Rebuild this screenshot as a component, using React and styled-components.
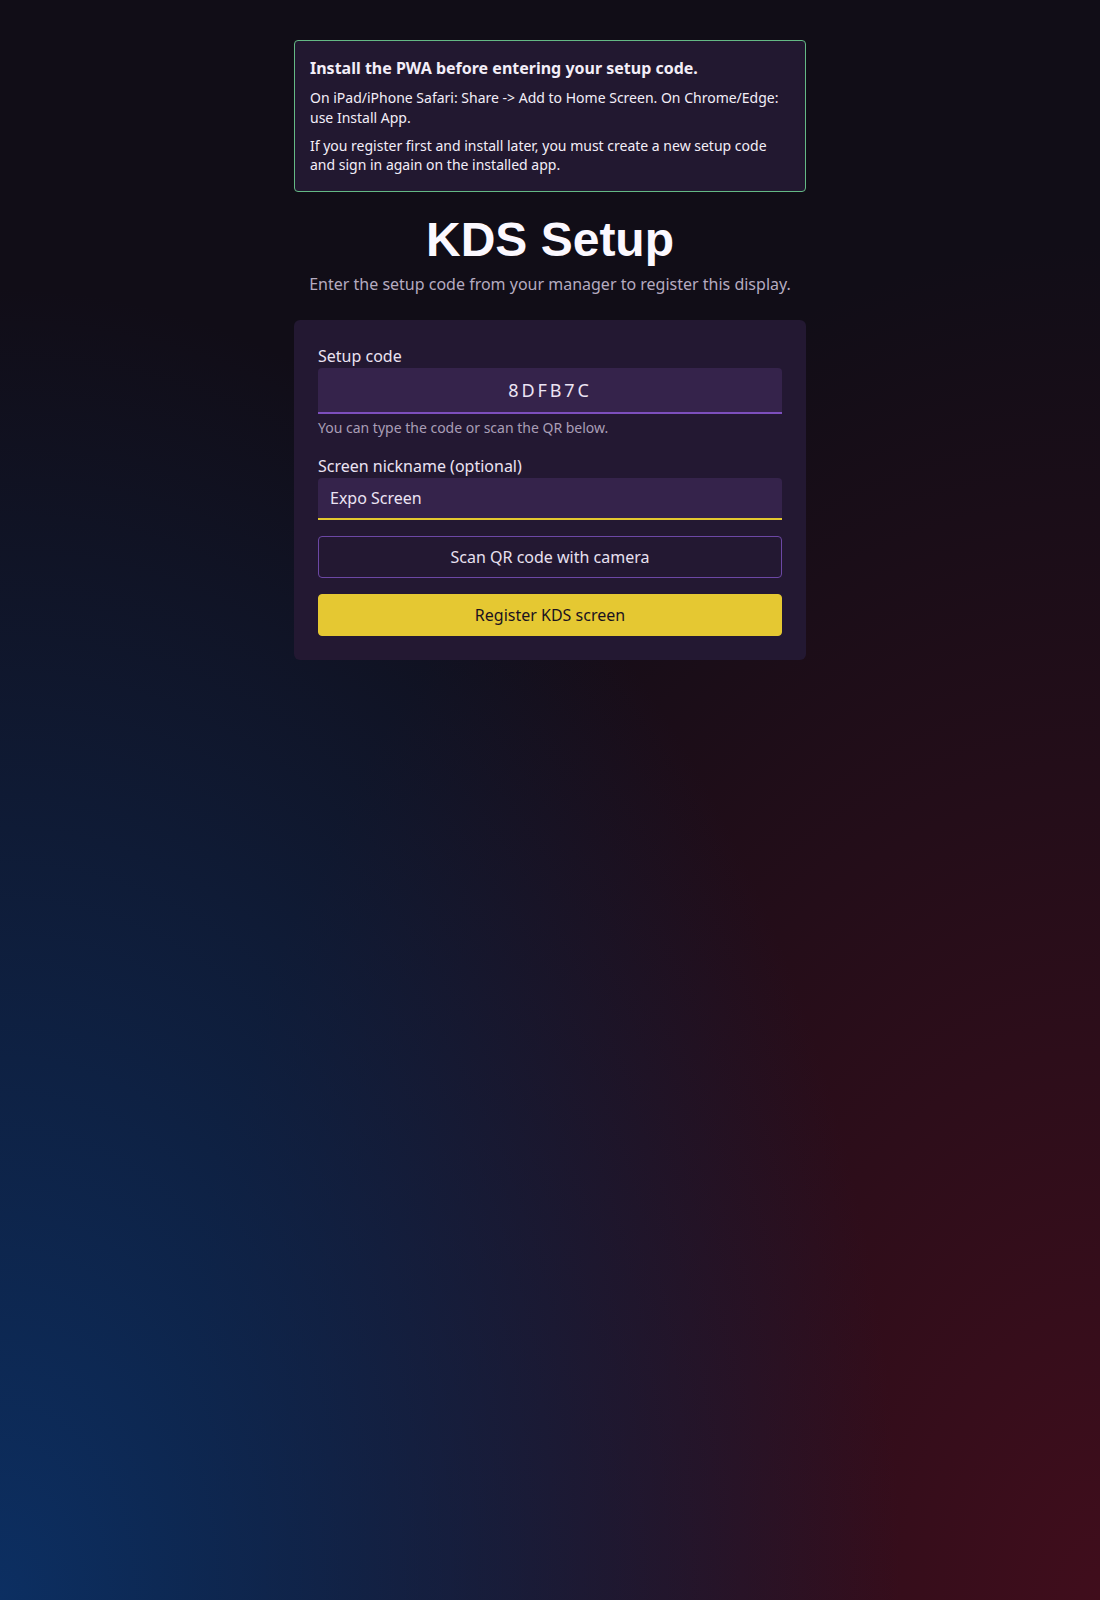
import styled, { createGlobalStyle } from 'styled-components';

const GlobalStyle = createGlobalStyle`
  * {
    box-sizing: border-box;
  }
  html, body {
    margin: 0;
    min-height: 100%;
  }
  body {
    font-family: "Noto Sans", "Open Sans", sans-serif;
    color: #f3eef8;
    background-color: #110d17;
    background-image:
      radial-gradient(ellipse at 0% 100%, rgba(12, 47, 98, 1) 0%, rgba(12, 47, 98, 0) 58%),
      radial-gradient(ellipse at 100% 100%, rgba(64, 13, 28, 1) 0%, rgba(64, 13, 28, 0) 60%);
    background-repeat: no-repeat;
    min-height: 1600px;
  }
`;

const Page = styled.main`
  width: 512px;
  margin: 0 auto;
  padding-top: 40px;
  display: flex;
  flex-direction: column;
`;

const Notice = styled.section`
  background: #221830;
  border: 1px solid #64b985;
  border-radius: 4px;
  padding: 16px 15px;
`;

const NoticeTitle = styled.p`
  margin: 0 0 9px;
  font-size: 16px;
  font-weight: 700;
  line-height: 1.4;
`;

const NoticeText = styled.p`
  margin: 0;
  font-size: 14px;
  line-height: 1.4;
  & + & {
    margin-top: 8px;
  }
`;

const Title = styled.h1`
  margin: 19px 0 0;
  font-family: "Liberation Sans", Arial, sans-serif;
  font-size: 48px;
  font-weight: 700;
  line-height: 1.2;
  text-align: center;
  color: #fbf8ff;
`;

const Subtitle = styled.p`
  margin: 4px 0 24px;
  font-size: 16px;
  line-height: 1.5;
  text-align: center;
  color: #b5abc0;
`;

const Card = styled.form`
  background: #231832;
  border-radius: 6px;
  padding: 24px;
  display: flex;
  flex-direction: column;
  gap: 16px;
`;

const Field = styled.div`
  display: flex;
  flex-direction: column;
`;

const Label = styled.label`
  font-size: 16px;
  line-height: 1.5;
  color: #ebe3f3;
`;

const Input = styled.input`
  width: 100%;
  height: ${p => (p.$code ? '46px' : '42px')};
  padding: 0 12px;
  border: none;
  border-bottom: 2px solid ${p => (p.$accent ? '#e3c82f' : '#7d4fbd')};
  border-radius: 4px 4px 0 0;
  background: #35234b;
  color: #ece4f4;
  font-family: "Noto Sans", sans-serif;
  font-size: ${p => (p.$code ? '18px' : '16px')};
  letter-spacing: ${p => (p.$code ? '0.16em' : 'normal')};
  text-align: ${p => (p.$code ? 'center' : 'left')};
  outline: none;
`;

const Help = styled.p`
  margin: 3px 0 0;
  font-size: 14px;
  line-height: 1.5;
  color: #a99eb6;
`;

const Button = styled.button`
  height: 42px;
  border-radius: 4px;
  font-family: "Noto Sans", sans-serif;
  font-size: 16px;
  cursor: pointer;
  border: 1px solid ${p => (p.$primary ? '#e5c832' : '#6c47a5')};
  background: ${p => (p.$primary ? '#e5c832' : 'transparent')};
  color: ${p => (p.$primary ? '#1a1220' : '#e8e0f0')};
`;

const App = () => {
  return (
    <>
      <GlobalStyle />
      <Page>
        <Notice>
          <NoticeTitle>Install the PWA before entering your setup code.</NoticeTitle>
          <NoticeText>
            On iPad/iPhone Safari: Share -&gt; Add to Home Screen. On Chrome/Edge: use Install App.
          </NoticeText>
          <NoticeText>
            If you register first and install later, you must create a new setup code and sign in again on the installed app.
          </NoticeText>
        </Notice>
        <Title>KDS Setup</Title>
        <Subtitle>Enter the setup code from your manager to register this display.</Subtitle>
        <Card onSubmit={e => e.preventDefault()}>
          <Field>
            <Label htmlFor="code">Setup code</Label>
            <Input id="code" $code defaultValue="8DFB7C" />
            <Help>You can type the code or scan the QR below.</Help>
          </Field>
          <Field>
            <Label htmlFor="nick">Screen nickname (optional)</Label>
            <Input id="nick" $accent defaultValue="Expo Screen" />
          </Field>
          <Button type="button">Scan QR code with camera</Button>
          <Button type="submit" $primary>Register KDS screen</Button>
        </Card>
      </Page>
    </>
  );
};

export default App;
